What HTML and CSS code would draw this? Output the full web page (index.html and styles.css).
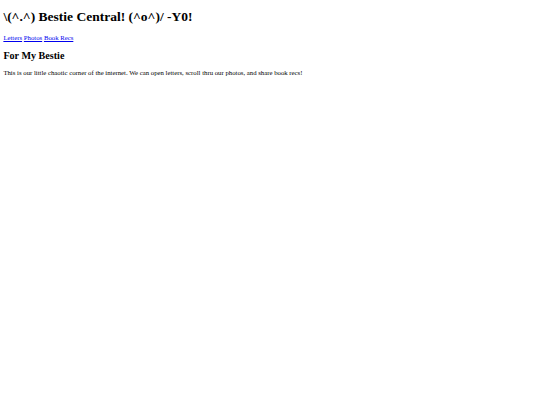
FILE: index.html
```html
<!DOCTYPE html>
<html>
<head>
<meta charset="utf-8">
<title>Bestie Central</title>
<link rel="stylesheet" href="styles.css">
</head>
<body>
<h1 class="title">\(^.^) Bestie Central! (^o^)/ -Y0!</h1>
<nav class="nav"><a href="#">Letters</a> <a href="#">Photos</a> <a href="#">Book Recs</a></nav>
<h2 class="subtitle">For My Bestie</h2>
<p class="intro">This is our little chaotic corner of the internet. We can open letters, scroll thru our photos, and share book recs!</p>
</body>
</html>
```
FILE: styles.css
```css
body {
  margin: 3.375px;
  font-family: "Liberation Serif", "Times New Roman", serif;
  font-size: 6.75px;
  color: #000;
  background: #fff;
}
.title {
  font-size: 13.5px;
  margin: 6px 0 0.67em;
}
.nav a {
  color: #0000ee;
}
.subtitle {
  font-size: 10.125px;
  margin: 0.83em 0;
}
.intro {
  margin: 1em 0;
}
```
